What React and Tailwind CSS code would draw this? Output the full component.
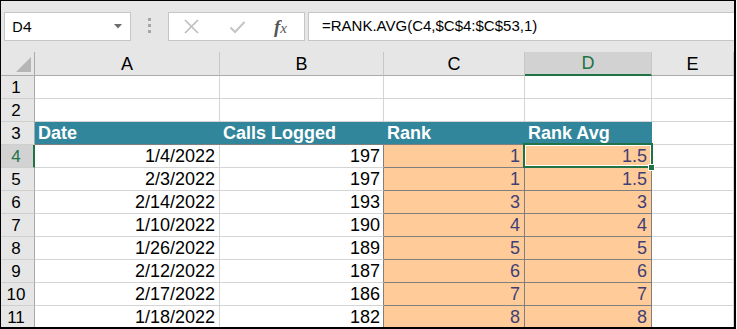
import React from "react";

const cols = ["A", "B", "C", "D", "E"];

const rows = [
  ["1/4/2022", 197, 1, "1.5"],
  ["2/3/2022", 197, 1, "1.5"],
  ["2/14/2022", 193, 3, 3],
  ["1/10/2022", 190, 4, 4],
  ["1/26/2022", 189, 5, 5],
  ["2/12/2022", 187, 6, 6],
  ["2/17/2022", 186, 7, 7],
  ["1/18/2022", 182, 8, 8],
];

const cell = "h-[23px] border-r border-b border-[#d4d4d4] flex items-end leading-[21px] whitespace-nowrap";
const rowHead = "h-[23px] border-r border-b border-r-[#a8a8a8] border-b-[#cfcfcf] bg-[#e6e6e6] flex items-end justify-center leading-[21px] text-[17px] pr-[3px]";
const input = "h-[23px] flex items-end leading-[21px] bg-[#ffcc99] text-[#3f3f76] justify-end pr-[4px] border-r border-b border-r-[#7f7f7f] border-b-[#7f7f7f]";

function FormulaBar() {
  return (
    <div className="h-[51px] bg-[#e6e6e6] flex pt-[11px] pl-[3px] gap-0">
      <div className="w-[127px] h-[29px] bg-white border border-[#c6c6c6] flex items-center justify-between pl-[7px] pr-[8px]">
        <span className="text-[15px] text-black" style={{ fontFamily: '"Noto Sans", sans-serif' }}>D4</span>
        <svg width="8" height="5" viewBox="0 0 8 5">
          <polygon points="0,0 8,0 4,4.5" fill="#6d6d6d" />
        </svg>
      </div>
      <div className="w-[37px] flex flex-col items-center pt-[6px] gap-[3px]">
        <div className="w-[3px] h-[3px] bg-[#a6a6a6]" />
        <div className="w-[3px] h-[3px] bg-[#a6a6a6]" />
        <div className="w-[3px] h-[3px] bg-[#a6a6a6]" />
      </div>
      <div className="w-[137px] h-[29px] bg-white border border-[#c6c6c6] flex items-center pl-[15px]">
        <svg width="15" height="15" viewBox="0 0 15 15">
          <path d="M1 1 L14 14 M14 1 L1 14" stroke="#bdbdbd" strokeWidth="1.6" fill="none" />
        </svg>
        <svg className="ml-[30px]" width="17" height="14" viewBox="0 0 17 14">
          <path d="M1.5 7.5 L6 12 L15.5 2" stroke="#c4c4c4" strokeWidth="2" fill="none" />
        </svg>
        <span
          className="ml-[28px] text-[19px] italic font-bold text-[#555] leading-none"
          style={{ fontFamily: '"Liberation Serif", serif' }}
        >
          f<span className="text-[15px] font-normal">x</span>
        </span>
      </div>
      <div
        className="flex-1 ml-[3px] h-[29px] bg-white border border-r-0 border-[#c6c6c6] flex items-center pl-[13px] text-[15px] text-black"
        style={{ fontFamily: '"Liberation Sans", Arial, sans-serif' }}
      >
        =RANK.AVG(C4,$C$4:$C$53,1)
      </div>
    </div>
  );
}

export default function App() {
  return (
    <div className="w-[737px] h-[329px] bg-white">
      <div
        className="w-[736px] h-[329px] border-l border-t border-r-2 border-b-2 border-black overflow-hidden"
        style={{ fontFamily: '"Liberation Sans", Arial, sans-serif' }}
      >
        <FormulaBar />

        <div className="grid grid-cols-[34px_185px_164px_141px_127px_1fr] text-[18px] text-black">
          {/* column headers */}
          <div className="h-[24px] bg-[#e6e6e6] border-r border-b border-[#ababab] flex items-end justify-end pr-[3px] pb-[3px]">
            <svg width="15" height="15" viewBox="0 0 15 15">
              <polygon points="15,0 15,15 0,15" fill="#b5b5b5" />
            </svg>
          </div>
          {cols.map((c) => (
            <div
              key={c}
              className={
                c === "D"
                  ? "h-[24px] bg-[#d2d2d2] border-r border-r-[#c6c6c6] border-b-2 border-b-[#217346] flex items-end justify-center leading-[22px] text-[#217346]"
                  : "h-[24px] bg-[#e6e6e6] border-r border-b border-r-[#c6c6c6] border-b-[#ababab] flex items-end justify-center leading-[22px]"
              }
            >
              {c}
            </div>
          ))}

          {/* rows 1-2 empty */}
          {[1, 2].map((n) => (
            <React.Fragment key={n}>
              <div className={rowHead}>{n}</div>
              <div className={cell} />
              <div className={cell} />
              <div className={cell} />
              <div className={cell} />
              <div className={cell} />
            </React.Fragment>
          ))}

          {/* table header */}
          <div className={rowHead}>3</div>
          {["Date", "Calls Logged", "Rank", "Rank Avg"].map((h) => (
            <div key={h} className="h-[23px] bg-[#31869b] border-b border-b-[#7f7f7f] text-white font-bold flex items-end leading-[21px] pl-[3px]">
              {h}
            </div>
          ))}
          <div className={cell} />

          {/* data rows */}
          {rows.map((r, i) => {
            const n = i + 4;
            const active = n === 4;
            return (
              <React.Fragment key={n}>
                <div
                  className={
                    active
                      ? "h-[23px] border-r-2 border-r-[#217346] border-b border-b-[#cfcfcf] bg-[#d2d2d2] flex items-end justify-center leading-[21px] text-[17px] text-[#217346] pr-[2px]"
                      : rowHead
                  }
                >
                  {n}
                </div>
                <div className={cell + " justify-end pr-[4px]"}>{r[0]}</div>
                <div className="h-[23px] border-r border-b border-r-[#7f7f7f] border-b-[#d4d4d4] flex items-end justify-end leading-[21px] pr-[3px]">
                  {r[1]}
                </div>
                <div className={input}>{r[2]}</div>
                <div className={input + " relative"}>
                  {r[3]}
                  {active && (
                    <>
                      <div className="absolute z-10 -left-[2px] -top-[2px] -right-[2px] -bottom-[1px] border-2 border-[#217346] shadow-[inset_0_0_0_1px_white]" />
                      <div className="absolute z-20 -right-[4px] -bottom-[4px] w-[7px] h-[7px] bg-[#217346] border border-white" />
                    </>
                  )}
                </div>
                <div className={cell} />
              </React.Fragment>
            );
          })}
        </div>
      </div>
    </div>
  );
}
